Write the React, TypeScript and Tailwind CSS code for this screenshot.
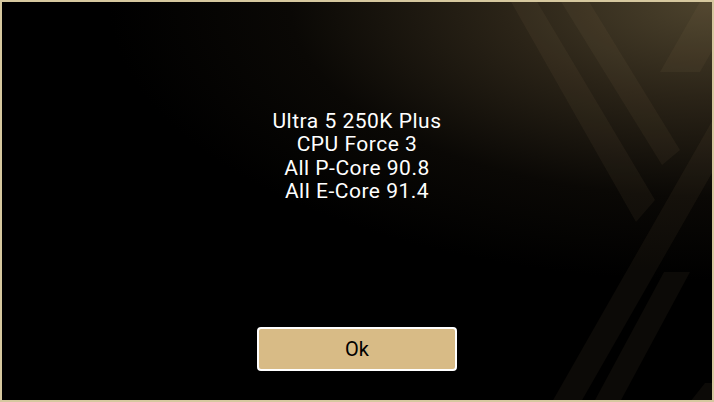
import { ReactNode } from 'react';

function Stripes() {
  // faint diagonal "X" pattern on the right side of the panel
  return (
    <svg className="absolute inset-0 pointer-events-none" width="710" height="398" viewBox="2 2 710 398">
      <g fill="#b29c6c" fillOpacity="0.065">
        <polygon points="510,0 536,0 655,200 636,222" />
        <polygon points="560,0 588,0 680,150 662,165" />
        <polygon points="552,402 581,402 811,0 781,0" />
        <polygon points="594,402 620,402 690,272 664,272" />
        <polygon points="660,72 700,72 741,0 701,0" />
        <polygon points="690,402 720,402 730,383 705,383" />
      </g>
    </svg>
  );
}

function Line({ children }: { children: ReactNode }) {
  return <p className="leading-[23.3px]">{children}</p>;
}

export default function App() {
  return (
    <div className="w-[714px] h-[402px] bg-black">
      <div className="relative w-full h-full overflow-hidden border-2 border-[#d6c89f] bg-[radial-gradient(ellipse_85%_70%_at_100%_0%,#4d432d_0%,#2a2317_35%,#0a0805_70%,#000_100%)] font-['Roboto',sans-serif]">
        <Stripes />
        <div className="relative flex flex-col items-center h-full">
          <div className="mt-[108px] text-center text-white text-[21px] tracking-[0.5px]">
            <Line>Ultra 5 250K Plus</Line>
            <Line>CPU Force 3</Line>
            <Line>All P-Core 90.8</Line>
            <Line>All E-Core 91.4</Line>
          </div>
          <button className="mt-auto mb-[29px] w-[200px] h-[44px] rounded-[4px] border-2 border-white bg-[#d8bb86] text-black text-[20px] flex items-center justify-center">
            Ok
          </button>
        </div>
      </div>
    </div>
  );
}
